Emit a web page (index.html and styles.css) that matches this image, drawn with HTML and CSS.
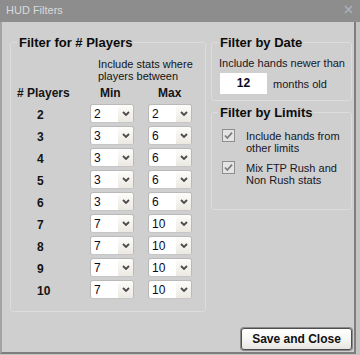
FILE: index.html
```html
<!DOCTYPE html>
<html>
<head>
<meta charset="utf-8">
<link rel="stylesheet" href="styles.css">
</head>
<body>
<div class="window">
  <div class="titlebar">
    <span class="title">HUD Filters</span>
    <svg class="close" width="9" height="9" viewBox="0 0 9 9"><path d="M1 1 L8 8 M8 1 L1 8" stroke="#a9b0bc" stroke-width="1.6" fill="none"/></svg>
  </div>
  <div class="client">
    <div class="columns">
      <fieldset class="group players">
        <legend>Filter for # Players</legend>
        <p class="hint">Include stats where<br>players between</p>
        <div class="grid">
          <span class="head">#&nbsp;Players</span><span class="head pad">Min</span><span class="head pad">Max</span>

          <span class="num-label">2</span>
          <div class="select"><span class="val">2</span><span class="arrow"><svg width="8" height="5" viewBox="0 0 8 5"><polyline points="1,1 4,4 7,1" fill="none" stroke="#4b4b4b" stroke-width="1.8"/></svg></span></div>
          <div class="select"><span class="val">2</span><span class="arrow"><svg width="8" height="5" viewBox="0 0 8 5"><polyline points="1,1 4,4 7,1" fill="none" stroke="#4b4b4b" stroke-width="1.8"/></svg></span></div>

          <span class="num-label">3</span>
          <div class="select"><span class="val">3</span><span class="arrow"><svg width="8" height="5" viewBox="0 0 8 5"><polyline points="1,1 4,4 7,1" fill="none" stroke="#4b4b4b" stroke-width="1.8"/></svg></span></div>
          <div class="select"><span class="val">6</span><span class="arrow"><svg width="8" height="5" viewBox="0 0 8 5"><polyline points="1,1 4,4 7,1" fill="none" stroke="#4b4b4b" stroke-width="1.8"/></svg></span></div>

          <span class="num-label">4</span>
          <div class="select"><span class="val">3</span><span class="arrow"><svg width="8" height="5" viewBox="0 0 8 5"><polyline points="1,1 4,4 7,1" fill="none" stroke="#4b4b4b" stroke-width="1.8"/></svg></span></div>
          <div class="select"><span class="val">6</span><span class="arrow"><svg width="8" height="5" viewBox="0 0 8 5"><polyline points="1,1 4,4 7,1" fill="none" stroke="#4b4b4b" stroke-width="1.8"/></svg></span></div>

          <span class="num-label">5</span>
          <div class="select"><span class="val">3</span><span class="arrow"><svg width="8" height="5" viewBox="0 0 8 5"><polyline points="1,1 4,4 7,1" fill="none" stroke="#4b4b4b" stroke-width="1.8"/></svg></span></div>
          <div class="select"><span class="val">6</span><span class="arrow"><svg width="8" height="5" viewBox="0 0 8 5"><polyline points="1,1 4,4 7,1" fill="none" stroke="#4b4b4b" stroke-width="1.8"/></svg></span></div>

          <span class="num-label">6</span>
          <div class="select"><span class="val">3</span><span class="arrow"><svg width="8" height="5" viewBox="0 0 8 5"><polyline points="1,1 4,4 7,1" fill="none" stroke="#4b4b4b" stroke-width="1.8"/></svg></span></div>
          <div class="select"><span class="val">6</span><span class="arrow"><svg width="8" height="5" viewBox="0 0 8 5"><polyline points="1,1 4,4 7,1" fill="none" stroke="#4b4b4b" stroke-width="1.8"/></svg></span></div>

          <span class="num-label">7</span>
          <div class="select"><span class="val">7</span><span class="arrow"><svg width="8" height="5" viewBox="0 0 8 5"><polyline points="1,1 4,4 7,1" fill="none" stroke="#4b4b4b" stroke-width="1.8"/></svg></span></div>
          <div class="select"><span class="val">10</span><span class="arrow"><svg width="8" height="5" viewBox="0 0 8 5"><polyline points="1,1 4,4 7,1" fill="none" stroke="#4b4b4b" stroke-width="1.8"/></svg></span></div>

          <span class="num-label">8</span>
          <div class="select"><span class="val">7</span><span class="arrow"><svg width="8" height="5" viewBox="0 0 8 5"><polyline points="1,1 4,4 7,1" fill="none" stroke="#4b4b4b" stroke-width="1.8"/></svg></span></div>
          <div class="select"><span class="val">10</span><span class="arrow"><svg width="8" height="5" viewBox="0 0 8 5"><polyline points="1,1 4,4 7,1" fill="none" stroke="#4b4b4b" stroke-width="1.8"/></svg></span></div>

          <span class="num-label">9</span>
          <div class="select"><span class="val">7</span><span class="arrow"><svg width="8" height="5" viewBox="0 0 8 5"><polyline points="1,1 4,4 7,1" fill="none" stroke="#4b4b4b" stroke-width="1.8"/></svg></span></div>
          <div class="select"><span class="val">10</span><span class="arrow"><svg width="8" height="5" viewBox="0 0 8 5"><polyline points="1,1 4,4 7,1" fill="none" stroke="#4b4b4b" stroke-width="1.8"/></svg></span></div>

          <span class="num-label">10</span>
          <div class="select"><span class="val">7</span><span class="arrow"><svg width="8" height="5" viewBox="0 0 8 5"><polyline points="1,1 4,4 7,1" fill="none" stroke="#4b4b4b" stroke-width="1.8"/></svg></span></div>
          <div class="select"><span class="val">10</span><span class="arrow"><svg width="8" height="5" viewBox="0 0 8 5"><polyline points="1,1 4,4 7,1" fill="none" stroke="#4b4b4b" stroke-width="1.8"/></svg></span></div>
        </div>
      </fieldset>
      <div class="right">
        <fieldset class="group date">
          <legend>Filter by Date</legend>
          <div class="date-body">
            <p class="text">Include hands newer than</p>
            <div class="date-row">
              <span class="numbox">12</span>
              <span class="text">months old</span>
            </div>
          </div>
        </fieldset>
        <fieldset class="group limits">
          <legend>Filter by Limits</legend>
          <div class="limits-body">
            <div class="check">
              <svg class="box" width="13" height="13" viewBox="0 0 13 13"><rect x="0.5" y="0.5" width="12" height="12" fill="#e4e4e4" stroke="#8e8e8e"/><polyline points="3,6.5 5.3,9 10,3.6" fill="none" stroke="#7c7c7c" stroke-width="1.7"/></svg>
              <span class="text">Include hands from<br>other limits</span>
            </div>
            <div class="check">
              <svg class="box" width="13" height="13" viewBox="0 0 13 13"><rect x="0.5" y="0.5" width="12" height="12" fill="#e4e4e4" stroke="#8e8e8e"/><polyline points="3,6.5 5.3,9 10,3.6" fill="none" stroke="#7c7c7c" stroke-width="1.7"/></svg>
              <span class="text">Mix FTP Rush and<br>Non Rush stats</span>
            </div>
          </div>
        </fieldset>
      </div>
    </div>
    <div class="footer">
      <button class="btn" type="button">Save and Close</button>
    </div>
  </div>
</div>
</body>
</html>
```

FILE: styles.css
```css
html, body {
  margin: 0;
  padding: 0;
  background: #cfcfcf;
}

.window {
  width: 360px;
  height: 355px;
  box-sizing: border-box;
  display: flex;
  flex-direction: column;
  background: #c4c4c4;
  font-family: "Liberation Sans", Arial, sans-serif;
  color: #141414;
}

.titlebar {
  height: 22px;
  flex: none;
  background: #8d8d8d;
  display: flex;
  justify-content: space-between;
  align-items: flex-start;
  padding: 3px 0 0 6px;
  box-sizing: border-box;
}

.title {
  font-size: 11px;
  line-height: 14px;
  color: #dadada;
}

.close {
  margin: 2px 7px 0 0;
}

.client {
  flex: 1;
  display: flex;
  flex-direction: column;
  background: #cfcfcf;
  border-left: 2px solid #a3a3a3;
  border-right: 2px solid #7e7e7e;
  border-bottom: 2px solid #7e7e7e;
  margin: 0 4px 1px 0;
  padding: 13px 2px 2px 8px;
}

.columns {
  display: flex;
  align-items: flex-start;
  gap: 5px;
}

.group {
  display: block;
  margin: 0;
  padding: 0;
  border: 1px solid #dcdcdc;
  border-radius: 3px;
  box-sizing: border-box;
  min-width: 0;
}

.group legend {
  margin-left: 6px;
  padding: 0 2px;
  font-size: 13px;
  font-weight: bold;
  line-height: 15px;
  color: #0c0c0c;
}

.players {
  width: 196px;
  height: 277px;
}

.hint {
  margin: 8px 0 0 87px;
  font-size: 11px;
  line-height: 12px;
}

.grid {
  margin: 4px 0 0 6px;
  display: grid;
  grid-template-columns: 59px 44px 44px;
  grid-template-rows: 15px;
  grid-auto-rows: 19px;
  column-gap: 14px;
  row-gap: 3px;
}

.head {
  font-size: 12px;
  font-weight: bold;
  line-height: 15px;
  white-space: nowrap;
}

.head.pad {
  padding-left: 10px;
}

.num-label {
  padding: 2px 0 0 20px;
  font-size: 12px;
  font-weight: bold;
  line-height: 18px;
}

.select {
  display: flex;
  box-sizing: border-box;
  height: 19px;
  border: 1px solid #b9b9b9;
  border-bottom-color: #c6c6c6;
  border-radius: 3px;
  background: #ffffff;
  overflow: hidden;
}

.val {
  flex: 1;
  padding: 1px 0 0 3px;
  font-size: 12px;
  line-height: 16px;
  color: #0a0a1e;
}

.arrow {
  width: 15px;
  display: flex;
  align-items: center;
  justify-content: center;
  background: linear-gradient(#fdfcfa, #ece9e2);
}

.right {
  display: block;
  width: 141px;
}

.date {
  height: 66px;
}

.date-body {
  padding-left: 7px;
}

.text {
  margin: 0;
  font-size: 11px;
  line-height: 12px;
  color: #161626;
}

.date-body > .text {
  margin-top: 7px;
}

.date-row {
  margin-top: 4px;
  display: flex;
  align-items: center;
  gap: 6px;
}

.numbox {
  margin-left: 1px;
  width: 47px;
  height: 21px;
  background: #ffffff;
  text-align: center;
  font-size: 12px;
  font-weight: bold;
  line-height: 21px;
  color: #0a0a1e;
}

.limits {
  margin-top: 4px;
  height: 105px;
}

.limits-body {
  padding-left: 10px;
}

.check {
  display: flex;
  align-items: flex-start;
  gap: 11px;
  margin-top: 9px;
}

.check + .check {
  margin-top: 7px;
}

.check .text {
  padding-top: 1px;
}

.box {
  flex: none;
}

.footer {
  margin-top: auto;
  display: flex;
  justify-content: flex-end;
}

.btn {
  width: 111px;
  height: 22px;
  margin: 0;
  padding: 0;
  border: 1px solid #4e4e4e;
  border-radius: 3px;
  box-shadow: 0 0 0 1px #8a8a8a;
  background: linear-gradient(#ffffff, #f6f6f4 50%, #e6e5e1);
  font-family: "Liberation Sans", Arial, sans-serif;
  font-size: 12px;
  font-weight: bold;
  color: #101010;
}
```
